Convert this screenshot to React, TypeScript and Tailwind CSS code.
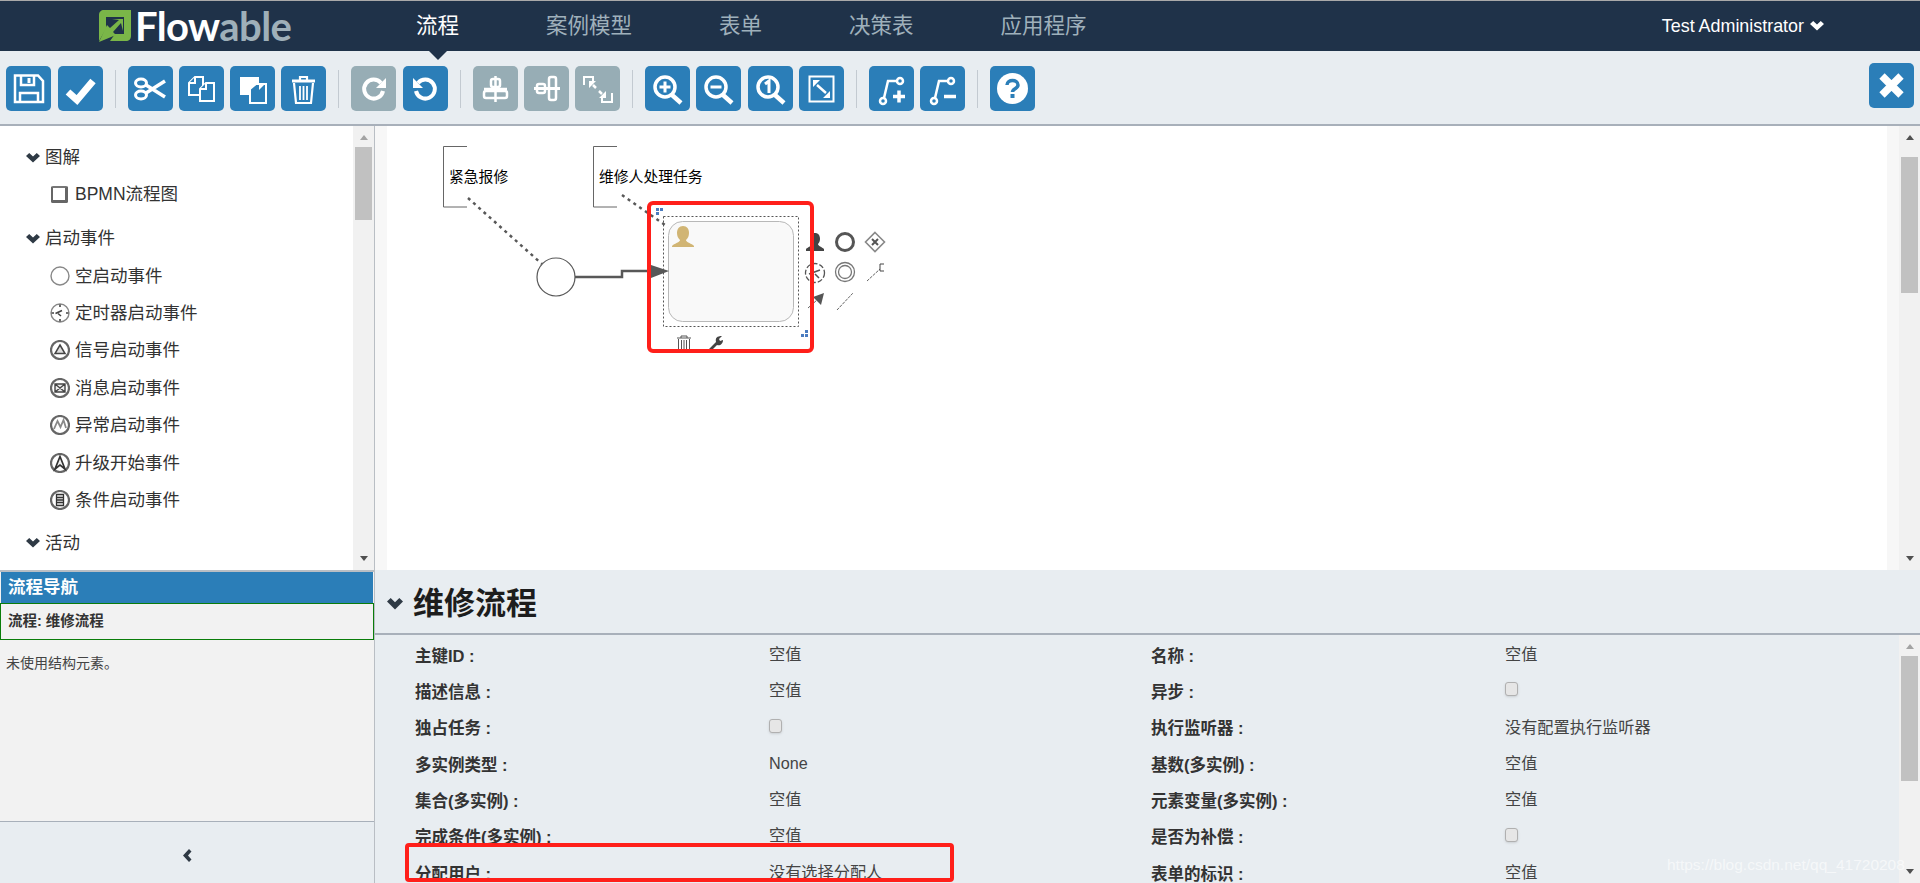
import type { ReactNode } from "react";

const font = "font-['Liberation_Sans','Noto_Sans_CJK_SC',sans-serif]";

// heavy chevrons like the glyphicon ones in the app
function ChevronDown({ className, big }: { className: string; big?: boolean }) {
  return (
    <svg
      width={big ? 16 : 14}
      height={big ? 12 : 10}
      viewBox="0 0 13 10"
      preserveAspectRatio="none"
      className={`shrink-0 ${className}`}
    >
      <path d="M0 3L3 0L6.5 3.5L10 0L13 3L6.5 9.5Z" fill="currentColor" />
    </svg>
  );
}

function ChevronLeft({ className }: { className: string }) {
  return (
    <svg width="10" height="13" viewBox="0 0 10 13" className={className}>
      <path d="M7 0L9.5 2.5L6 6.5L9.5 10.5L7 13L1 6.5Z" fill="currentColor" />
    </svg>
  );
}

// toolbar icons, drawn in the 45x45 box of the button
const toolIcons: Record<string, ReactNode> = {
  save: (
    <g fill="none" stroke="#fff" strokeWidth="2.5">
      <path d="M9 9.5H32L37 15V36H9Z" />
      <path d="M15 10V19H28V10" />
      <path d="M14 36V27H32V36" />
      <path d="M23 12V17" strokeWidth="3" />
    </g>
  ),
  check: <path d="M10 26L19 34L35 15" fill="none" stroke="#fff" strokeWidth="7" />,
  cut: (
    <g fill="none" stroke="#fff" strokeWidth="3">
      <ellipse cx="13" cy="17" rx="5.5" ry="4" />
      <ellipse cx="13" cy="29" rx="5.5" ry="4" />
      <path d="M18 19L37 31M18 27L37 15" strokeWidth="3.5" />
    </g>
  ),
  copy: (
    <g fill="#2b7eb8" stroke="#fff" strokeWidth="2">
      <path d="M10 17L16 11H24V29H10Z" />
      <path d="M10 17H16V11" />
      <path d="M21 23L27 17H35V35H21Z" />
      <path d="M21 23H27V17" />
    </g>
  ),
  paste: (
    <g>
      <path d="M10 11H29V29H10Z" fill="#fff" />
      <path d="M20 23L26 18H36V37H20Z" fill="#2b7eb8" stroke="#fff" strokeWidth="2" />
      <path d="M29 24L35 18H29Z" fill="#fff" />
    </g>
  ),
  trash: (
    <g fill="none" stroke="#fff" strokeWidth="2.2">
      <path d="M13 17L15 37H30L32 17" />
      <path d="M11 15H34" strokeWidth="3" />
      <path d="M19 14V11H26V14" />
      <path d="M19 20V34M22.5 20V34M26 20V34" strokeWidth="1.8" />
    </g>
  ),
  redo: (
    <g>
      <path d="M30 17A9.5 9.5 0 1 0 32 25" fill="none" stroke="#fff" strokeWidth="4" />
      <path d="M35 12V22H25Z" fill="#fff" />
    </g>
  ),
  undo: (
    <g>
      <path d="M15 17A9.5 9.5 0 1 1 13 25" fill="none" stroke="#fff" strokeWidth="4" />
      <path d="M10 12V22H20Z" fill="#fff" />
    </g>
  ),
  alignH: (
    <g fill="none" stroke="#fff" strokeWidth="2.5">
      <rect x="18" y="13" width="9" height="8" rx="2" />
      <rect x="11" y="25" width="23" height="7" rx="2" />
      <path d="M22.5 10V36M11 23H34" strokeWidth="2.5" />
    </g>
  ),
  alignV: (
    <g fill="none" stroke="#fff" strokeWidth="2.5">
      <rect x="13" y="18" width="8" height="9" rx="2" />
      <rect x="25" y="11" width="7" height="23" rx="2" />
      <path d="M10 22.5H36" strokeWidth="3" />
    </g>
  ),
  same: (
    <g fill="none" stroke="#fff" strokeWidth="2">
      <path d="M9 19V11H18V15" />
      <path d="M37 27V36H27V32" />
      <path d="M18 19L21 22M24 25L27 28" strokeWidth="2.5" />
      <path d="M14 15H21L14 22Z M31 32H24L31 25Z" fill="#fff" stroke="none" />
    </g>
  ),
  zoomIn: (
    <g fill="none" stroke="#fff">
      <circle cx="20" cy="21" r="10" strokeWidth="3.5" />
      <path d="M27 29L36 37" strokeWidth="4.5" />
      <path d="M14.5 21H25.5M20 15.5V26.5" strokeWidth="3" />
    </g>
  ),
  zoomOut: (
    <g fill="none" stroke="#fff">
      <circle cx="20" cy="21" r="10" strokeWidth="3.5" />
      <path d="M27 29L36 37" strokeWidth="4.5" />
      <path d="M14.5 21H25.5" strokeWidth="3" />
    </g>
  ),
  zoom1: (
    <g fill="none" stroke="#fff">
      <circle cx="20" cy="21" r="10" strokeWidth="3.5" />
      <path d="M27 29L36 37" strokeWidth="4.5" />
      <path d="M17 18L21 15V27" strokeWidth="3" />
    </g>
  ),
  fit: (
    <g fill="none" stroke="#fff">
      <rect x="10.5" y="10.5" width="24" height="25" strokeWidth="2" />
      <path d="M18 19L27 27" strokeWidth="2.5" />
      <path d="M14 14H21L14 21Z M31 32H24L31 25Z" fill="#fff" stroke="none" />
    </g>
  ),
  bendAdd: (
    <g fill="none" stroke="#fff" strokeWidth="2.5">
      <circle cx="31" cy="15" r="3" />
      <circle cx="14" cy="35" r="3" />
      <path d="M28 15H19L15 32" />
      <path d="M24 30.5H36M30 24.5V36.5" strokeWidth="3.5" />
    </g>
  ),
  bendRemove: (
    <g fill="none" stroke="#fff" strokeWidth="2.5">
      <circle cx="31" cy="15" r="3" />
      <circle cx="14" cy="35" r="3" />
      <path d="M28 15H19L15 32" />
      <path d="M24 30.5H36" strokeWidth="3.5" />
    </g>
  ),
  help: (
    <g>
      <ellipse cx="22.5" cy="22.5" rx="15.5" ry="15.5" fill="#fff" />
      <path d="M17 19C17 13 28 13 28 19C28 23 22.5 22.5 22.5 26" fill="none" stroke="#2b7eb8" strokeWidth="3.5" />
      <rect x="20.5" y="28" width="4" height="4" fill="#2b7eb8" />
    </g>
  ),
  close: <path d="M13 13L32 32M32 13L13 32" fill="none" stroke="#fff" strokeWidth="7.5" />,
};

function ToolButton({ icon, disabled, nudge }: { icon: string; disabled?: boolean; nudge?: boolean }) {
  return (
    <button
      className={`h-[45px] w-[45px] shrink-0 rounded-[5px] ${disabled ? "bg-[#97adb5]" : "bg-[#2b7eb8]"} ${nudge ? "ml-[1px]" : ""}`}
    >
      <svg width="45" height="45" viewBox="0 0 45 45">
        {toolIcons[icon]}
      </svg>
    </button>
  );
}

function Separator() {
  return <div className="mx-[6px] h-[38px] w-[1px] shrink-0 bg-[#c3cad1]" />;
}

function Toolbar() {
  return (
    <div className="flex h-[75px] shrink-0 items-center gap-[6px] border-b-2 border-[#a8b0ba] bg-[#e8edf1] px-[6px] pt-[2px]">
      <ToolButton icon="save" />
      <ToolButton icon="check" nudge />
      <Separator />
      <ToolButton icon="cut" />
      <ToolButton icon="copy" />
      <ToolButton icon="paste" />
      <ToolButton icon="trash" />
      <Separator />
      <ToolButton icon="redo" disabled />
      <ToolButton icon="undo" nudge />
      <Separator />
      <ToolButton icon="alignH" disabled />
      <ToolButton icon="alignV" disabled />
      <ToolButton icon="same" disabled />
      <Separator />
      <ToolButton icon="zoomIn" />
      <ToolButton icon="zoomOut" />
      <ToolButton icon="zoom1" nudge />
      <ToolButton icon="fit" />
      <Separator />
      <ToolButton icon="bendAdd" />
      <ToolButton icon="bendRemove" />
      <Separator />
      <ToolButton icon="help" />
      <div className="ml-auto">
        <ToolButton icon="close" />
      </div>
    </div>
  );
}

function Logo() {
  return (
    <div className="flex w-[200px] shrink-0 items-center gap-[4px]">
      <svg width="33" height="32" viewBox="0 0 33 32" className="shrink-0">
        <path d="M6 0H33V26C33 29 31 31 28 31H12L17 24H26V7H8V19L1 31V5C1 2 3 0 6 0Z" fill="#7ab648" />
        <path d="M1 32L9 15L12 18L21 10L14 9H25V21L23 13L15 22L18 25Z" fill="#7ab648" />
      </svg>
      <div className="font-['Lato',sans-serif] text-[40px] font-bold leading-none tracking-[-0.6px]">
        <span className="text-white">Flow</span>
        <span className="text-[#9fb0b9]">able</span>
      </div>
    </div>
  );
}

function Header() {
  const items = ["流程", "案例模型", "表单", "决策表", "应用程序"];
  return (
    <div className="relative flex h-[51px] shrink-0 items-center border-t border-[#a9a9a9] bg-[#1f3249] pl-[98px] pr-[96px]">
      <Logo />
      <nav className="ml-[118px] flex items-center gap-[87px] text-[21.5px]">
        {items.map((item, i) => (
          <span key={item} className={i === 0 ? "text-white" : "text-[#9fb0bb]"}>
            {item}
          </span>
        ))}
      </nav>
      {/* marker under the active tab */}
      <div className="absolute left-[429px] top-[50px] z-10 h-0 w-0 border-x-[9px] border-t-[9px] border-x-transparent border-t-[#1f3249]" />
      <div className="ml-auto flex items-center gap-[6px] text-[17.9px] text-white">
        Test Administrator
        <ChevronDown className="text-white" />
      </div>
    </div>
  );
}

function Scrollbar({ thumbTop, thumbHeight, upColor }: { thumbTop: string; thumbHeight: string; upColor: string }) {
  return (
    <div className="relative flex h-full w-[21px] shrink-0 flex-col items-center bg-[#f1f1f1]">
      <div className={`absolute top-[9px] h-0 w-0 border-x-[4.5px] border-b-[5px] border-x-transparent ${upColor}`} />
      <div className={`absolute left-[2px] w-[17px] bg-[#c1c1c1] ${thumbTop} ${thumbHeight}`} />
      <div className="absolute bottom-[9px] h-0 w-0 border-x-[4.5px] border-t-[5px] border-x-transparent border-t-[#505050]" />
    </div>
  );
}

// small event icons of the palette
const paletteIcons: Record<string, ReactNode> = {
  none: null,
  timer: (
    <g fill="none" stroke="#444" strokeWidth="1.6">
      <path d="M5.5 10.5L12 7.5M8 10.5L11 13" />
      <path d="M10 1.5V4M10 16V18.5M1.5 10H4M16 10H18.5" />
    </g>
  ),
  signal: <path d="M10 5L15 13.5H5Z" fill="#ddd" stroke="#444" strokeWidth="1.5" />,
  message: <path d="M5 6H15V14H5ZM5 6L15 14M15 6L5 14" fill="#eee" stroke="#444" strokeWidth="1.4" />,
  error: <path d="M4 14L7.5 6L10.5 12L13.5 5L16 13" fill="none" stroke="#888" strokeWidth="1.8" />,
  escalation: <path d="M10 3.5L15 16L10 12L5 16Z" fill="#eee" stroke="#333" strokeWidth="1.7" />,
  conditional: <path d="M6.5 4.5H13.5V15.5H6.5ZM6.5 7.5H13.5M6.5 10H13.5M6.5 12.5H13.5" fill="#eee" stroke="#333" strokeWidth="1.3" />,
};

function PaletteItem({ icon, label }: { icon: string; label: string }) {
  const thick = icon !== "none" && icon !== "timer";
  return (
    <div className="flex h-[37.4px] items-center gap-[5px] pl-[50px]">
      <svg width="20" height="20" viewBox="0 0 20 20">
        <circle cx="10" cy="10" r="9" fill="#fff" stroke={thick ? "#666" : "#888"} strokeWidth={thick ? 2.2 : 1.4} />
        {paletteIcons[icon]}
      </svg>
      <span>{label}</span>
    </div>
  );
}

function PaletteGroup({ label }: { label: string }) {
  return (
    <div className="flex h-[37px] items-center gap-[5px] pl-[26px]">
      <ChevronDown className="text-[#2f3a45]" />
      <span>{label}</span>
    </div>
  );
}

function Palette() {
  return (
    <div className="flex h-[444px] shrink-0 border-r border-[#b9bec4] bg-white">
      <div className="flex-1 overflow-hidden pt-[13px] text-[17.5px] text-[#333]">
        <PaletteGroup label="图解" />
        <div className="flex h-[37px] items-center gap-[7px] pl-[51px]">
          <div className="h-[17px] w-[17px] rounded-[2px] border-2 border-[#666] border-b-[3px] border-r-[3px] border-t-[#777] bg-white" />
          <span>BPMN流程图</span>
        </div>
        <div className="h-[7px]" />
        <PaletteGroup label="启动事件" />
        <PaletteItem icon="none" label="空启动事件" />
        <PaletteItem icon="timer" label="定时器启动事件" />
        <PaletteItem icon="signal" label="信号启动事件" />
        <PaletteItem icon="message" label="消息启动事件" />
        <PaletteItem icon="error" label="异常启动事件" />
        <PaletteItem icon="escalation" label="升级开始事件" />
        <PaletteItem icon="conditional" label="条件启动事件" />
        <div className="h-[6px]" />
        <PaletteGroup label="活动" />
      </div>
      <Scrollbar thumbTop="top-[21px]" thumbHeight="h-[73px]" upColor="border-b-[#a3a3a3]" />
    </div>
  );
}

function Navigator() {
  return (
    <div className="flex flex-1 flex-col border-r border-[#b9bec4]">
      <div className="flex-1 border-t-2 border-[#b9bec4] bg-[#f2f2f2]">
        <div className="mx-[1px] flex h-[31px] items-center bg-[#2b7eb8] pl-[7px] text-[17.5px] font-bold text-white">
          流程导航
        </div>
        <div className="flex h-[37px] items-center border border-[#0a7d0a] pl-[7px] text-[14.5px] font-bold text-[#333]">
          流程: 维修流程
        </div>
        <div className="pl-[6px] pt-[13px] text-[14px] text-[#444]">未使用结构元素。</div>
      </div>
      <div className="flex h-[62px] shrink-0 items-center justify-center border-t border-[#a8b0ba] bg-[#e8edf1] pt-[5px]">
        <ChevronLeft className="text-[#2f3a45]" />
      </div>
    </div>
  );
}

function Diagram() {
  const line = "#585858";
  return (
    <svg width="1545" height="444" viewBox="375 126 1545 444" className="absolute left-0 top-0">
      {/* annotations */}
      <path d="M467 146.5H443.5V207H467" fill="none" stroke="#666" />
      <path d="M617 146.5H593.5V207H617" fill="none" stroke="#666" />
      <text x="449" y="182" fontSize="14.8" fill="#000">紧急报修</text>
      <text x="599" y="182" fontSize="14.8" fill="#000">维修人处理任务</text>
      <path d="M468 198L542 264" stroke={line} strokeWidth="2.5" strokeDasharray="3 4" />
      <path d="M622 195L668 227" stroke={line} strokeWidth="2.5" strokeDasharray="3 4" />

      {/* start event and flow */}
      <circle cx="556" cy="277" r="19" fill="#fff" stroke={line} strokeWidth="1.2" />
      <path d="M575 277H622V271H655" fill="none" stroke={line} strokeWidth="2.5" />

      {/* user task */}
      <rect x="668.5" y="221.5" width="125" height="100" rx="14" fill="#f9f9f9" stroke="#b8b8b8" />
      <path d="M651 265L669 271L651 278Z" fill={line} />
      <path d="M683 226C679 226 677 229 677 233C677 236 678 238 680 240C680 242 676 243 673 245C672 246 672 246 672 247H694C694 246 694 246 693 245C690 243 686 242 686 240C688 238 689 236 689 233C689 229 687 226 683 226Z" fill="#d1b574" />
      <rect x="663.5" y="216.5" width="135" height="110" fill="none" stroke="#555" strokeDasharray="2 2" />
      <path d="M656 208h3v3h-3zM660 208h3v3h-3zM656 212h3v3h-3z" fill="#4a7cc0" />
      <path d="M805 330h3v3h-3zM801 334h3v3h-3zM805 334h3v3h-3z" fill="#4a7cc0" />

      {/* morph shortcuts */}
      <path d="M815 233C812 233 810 235 810 239C810 241 811 243 812 244C812 246 808 247 806 249V251H824V249C822 247 818 246 818 244C819 243 820 241 820 239C820 235 818 233 815 233Z" fill="#444" />
      <circle cx="845" cy="242" r="8.5" fill="none" stroke="#555" strokeWidth="3" />
      <path d="M875 232.5L884.5 242L875 251.5L865.5 242Z" fill="none" stroke="#888" strokeWidth="1.6" />
      <path d="M872 239L878 245M878 239L872 245" stroke="#555" strokeWidth="2" />
      <circle cx="815" cy="273" r="9.5" fill="none" stroke="#555" strokeWidth="1.3" strokeDasharray="5 2" />
      <path d="M809 274L820 270M815 274L819 278" stroke="#555" strokeWidth="1.6" />
      <circle cx="845" cy="272" r="9.5" fill="none" stroke="#777" strokeWidth="1.3" />
      <circle cx="845" cy="272" r="6.5" fill="none" stroke="#777" strokeWidth="1.3" />
      <path d="M867 281L880 269" stroke="#666" strokeDasharray="3 1" />
      <path d="M884 264H880V271H884" fill="none" stroke="#444" />
      <path d="M808 308L817 300" stroke="#666" strokeDasharray="3 1" />
      <path d="M824 293L813 297L821 305Z" fill="#555" />
      <path d="M837 310L853 293" stroke="#666" strokeDasharray="3 1" />

      {/* actions under the task */}
      <g fill="none" stroke="#555">
        <path d="M677 338H691M681 338V336H687V338M678.5 339V350H689.5V339M681.5 340V350M684 340V350M686.5 340V350" />
      </g>
      <path d="M707 351L716 342C715 338 717 336 722 336L719 339L720 341L723 340C723 344 720 346 717 345L709 353Z" fill="#444" />

      {/* review marking */}
      <rect x="649" y="203" width="163" height="148" rx="4" fill="none" stroke="#ff1f1a" strokeWidth="4" />
    </svg>
  );
}

function Canvas() {
  return (
    <div className="flex h-[444px] shrink-0 bg-white">
      <div className="w-[12px] shrink-0 bg-[#f7f7f7]" />
      <div className="relative flex-1" />
      <div className="w-[12px] shrink-0 bg-[#f7f7f7]" />
      <Scrollbar thumbTop="top-[31px]" thumbHeight="h-[136px]" upColor="border-b-[#505050]" />
    </div>
  );
}

function Cell({ label, value, check }: { label: string; value?: string; check?: boolean }) {
  return (
    <div className="flex h-[36.3px] items-center">
      <div className="w-[354px] shrink-0 pt-[4px] text-[16.5px] font-bold text-[#333]">{label} :</div>
      {check ? (
        <div className="mb-[2px] h-[14px] w-[13px] rounded-[3px] border border-[#b0b0b0] bg-[#e6e6e6] shadow-sm" />
      ) : (
        <div className="text-[#444]">{value}</div>
      )}
    </div>
  );
}

function Properties() {
  const left = [
    { label: "主键ID", value: "空值" },
    { label: "描述信息", value: "空值" },
    { label: "独占任务", check: true },
    { label: "多实例类型", value: "None" },
    { label: "集合(多实例)", value: "空值" },
    { label: "完成条件(多实例)", value: "空值" },
    { label: "分配用户", value: "没有选择分配人" },
  ];
  const right = [
    { label: "名称", value: "空值" },
    { label: "异步", check: true },
    { label: "执行监听器", value: "没有配置执行监听器" },
    { label: "基数(多实例)", value: "空值" },
    { label: "元素变量(多实例)", value: "空值" },
    { label: "是否为补偿", check: true },
    { label: "表单的标识", value: "空值" },
  ];
  return (
    <div className="flex min-h-0 flex-1 flex-col bg-[#e8edf1]">
      <div className="flex h-[65px] shrink-0 items-center gap-[10px] border-b-2 border-[#a8b0ba] pl-[12px] pt-[5px] text-[31px] font-bold text-[#1d1d1d]">
        <ChevronDown big className="text-[#2f3a45]" />
        维修流程
      </div>
      <div className="flex min-h-0 flex-1">
        <div className="grid flex-1 grid-cols-[736px_1fr] overflow-hidden pl-[40px] pt-[1px] text-[16.2px]">
          <div>
            {left.map((c) => (
              <Cell key={c.label} {...c} />
            ))}
          </div>
          <div>
            {right.map((c) => (
              <Cell key={c.label} {...c} />
            ))}
          </div>
        </div>
        <Scrollbar thumbTop="top-[21px]" thumbHeight="h-[125px]" upColor="border-b-[#a3a3a3]" />
      </div>
    </div>
  );
}

export default function App() {
  return (
    <div className={`relative flex h-[883px] w-[1920px] flex-col overflow-hidden ${font}`}>
      <Header />
      <Toolbar />
      <div className="flex min-h-0 flex-1">
        <div className="flex w-[375px] shrink-0 flex-col bg-[#f2f2f2]">
          <Palette />
          <Navigator />
        </div>
        <div className="relative flex min-w-0 flex-1 flex-col">
          <Canvas />
          <Diagram />
          <Properties />
        </div>
      </div>
      {/* red marking on the assignee row */}
      <div className="absolute left-[405px] top-[843px] h-[39px] w-[549px] rounded-[4px] border-4 border-[#ff1f1a]" />
      <div className="absolute left-[1667px] top-[853px] text-[15.5px] text-white/60">https://blog.csdn.net/qq_41720208</div>
    </div>
  );
}
